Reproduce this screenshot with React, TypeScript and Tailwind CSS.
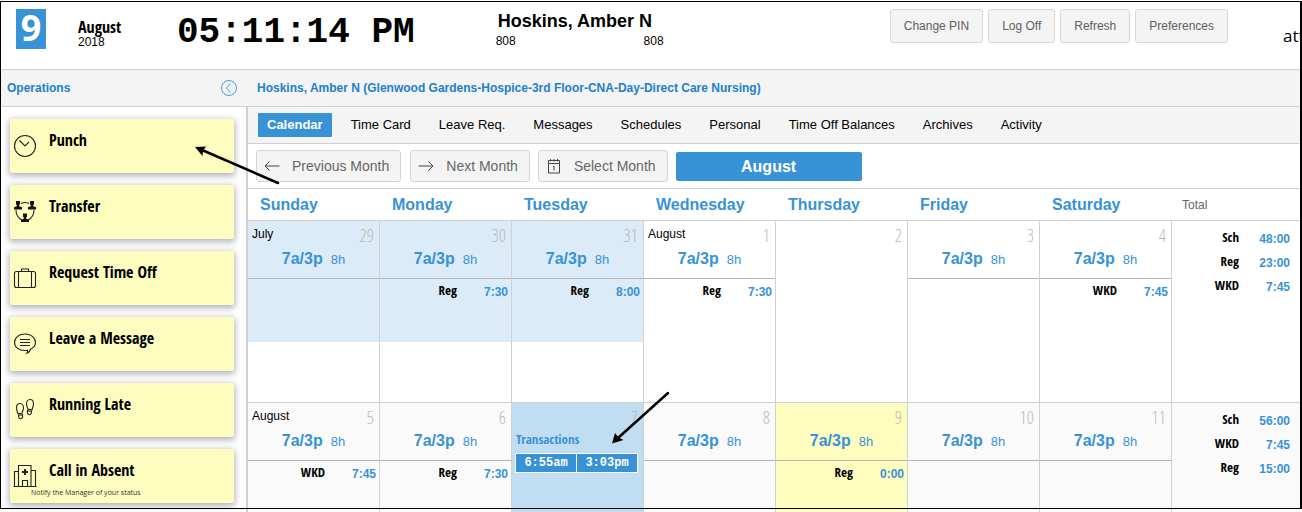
import { clsx } from 'clsx'
import type { ReactNode } from 'react'

interface Hours {
  label: string
  value: string
}

interface Day {
  num: number
  month?: string
  shift?: boolean
  hours?: Hours
  tone?: 'past' | 'today'
  punches?: string[]
}

interface Week {
  days: Day[]
  totals: Hours[]
  shaded?: boolean
}

const narrow = "font-['Open_Sans_Condensed','Liberation_Sans_Narrow','Liberation_Sans',sans-serif]"
const narrowLight =
  "font-['Open_Sans_Condensed_Light','Open_Sans_Light_Condensed','Liberation_Sans_Narrow','Open_Sans',sans-serif]"

const weekdays = ['Sunday', 'Monday', 'Tuesday', 'Wednesday', 'Thursday', 'Friday', 'Saturday']

const tabs = [
  'Calendar',
  'Time Card',
  'Leave Req.',
  'Messages',
  'Schedules',
  'Personal',
  'Time Off Balances',
  'Archives',
  'Activity',
]

const weeks: Week[] = [
  {
    days: [
      { num: 29, month: 'July', shift: true, tone: 'past' },
      { num: 30, shift: true, tone: 'past', hours: { label: 'Reg', value: '7:30' } },
      { num: 31, shift: true, tone: 'past', hours: { label: 'Reg', value: '8:00' } },
      { num: 1, month: 'August', shift: true, hours: { label: 'Reg', value: '7:30' } },
      { num: 2 },
      { num: 3, shift: true },
      { num: 4, shift: true, hours: { label: 'WKD', value: '7:45' } },
    ],
    totals: [
      { label: 'Sch', value: '48:00' },
      { label: 'Reg', value: '23:00' },
      { label: 'WKD', value: '7:45' },
    ],
  },
  {
    shaded: true,
    days: [
      { num: 5, month: 'August', shift: true, hours: { label: 'WKD', value: '7:45' } },
      { num: 6, shift: true, hours: { label: 'Reg', value: '7:30' } },
      { num: 7, punches: ['6:55am', '3:03pm'] },
      { num: 8, shift: true },
      { num: 9, shift: true, tone: 'today', hours: { label: 'Reg', value: '0:00' } },
      { num: 10, shift: true },
      { num: 11, shift: true },
    ],
    totals: [
      { label: 'Sch', value: '56:00' },
      { label: 'WKD', value: '7:45' },
      { label: 'Reg', value: '15:00' },
    ],
  },
]

function Icon({ children }: { children: ReactNode }) {
  return (
    <svg viewBox="0 0 24 24" className="h-6 w-6 shrink-0" fill="none" stroke="#222" strokeWidth="1.1" aria-hidden="true">
      {children}
    </svg>
  )
}

const person = 'M-2 -4h4v3l-.8 1.300v1l2.800 1v2.200h-8v-2.200l2.800 -1v-1l-.8 -1.300z'

const operations: { label: string; note?: string; icon: ReactNode }[] = [
  {
    label: 'Punch',
    icon: (
      <Icon>
        <circle cx="12" cy="12" r="10.5" />
        <path d="M6.500 6.500 12 12l4-4" />
      </Icon>
    ),
  },
  {
    label: 'Transfer',
    icon: (
      <Icon>
        <path d="M8 3.500q4-2 8 0M3 10q0 7 6 10M21 10q0 7-6 10" />
        <g fill="#111" stroke="none">
          <path transform="translate(5 5)" d={person} />
          <path transform="translate(19 5)" d={person} />
          <path transform="translate(12 17.500)" d={person} />
        </g>
      </Icon>
    ),
  },
  {
    label: 'Request Time Off',
    icon: (
      <Icon>
        <rect x="1.500" y="5.500" width="21" height="16" rx="2" />
        <path d="M5.500 5.500v16M18.500 5.500v16M8.500 5.500v-2.500h7v2.500" />
      </Icon>
    ),
  },
  {
    label: 'Leave a Message',
    icon: (
      <Icon>
        <path d="M17.500 17.200c3-1.400 5-3.800 5-6.700C22.500 5.500 17.800 2 12 2S1.500 5.500 1.500 10.500 6.200 18.500 12 18.500c1 0 1.800 0 2.500-.2.3 1.200 0 2-.7 3 1.700-.5 3.300-2.200 3.700-4.100z" />
        <path d="M7 7.500h10M7 10.500h10M7 13.500h10" />
      </Icon>
    ),
  },
  {
    label: 'Running Late',
    icon: (
      <Icon>
        <path d="M3.500 9.500c0-3 1.500-4 3.500-4s3.500 2 3.500 4.500c0 2-1 3-1.200 5l-4.300.8c-.5-2-1.500-3.500-1.500-6.300zM5.500 17.300l4-.7c.4 2.500-.2 4-1.700 4.200s-2.300-1.300-2.300-3.500z" />
        <path d="M20.500 5.500c0-3-1.500-4-3.500-4s-3.500 2-3.500 4.500c0 2 1 3 1.200 5l4.300.8c.5-2 1.500-3.500 1.500-6.300zM18.500 13.300l-4-.7c-.4 2.500.2 4 1.700 4.200s2.300-1.300 2.300-3.500z" />
      </Icon>
    ),
  },
  {
    label: 'Call in Absent',
    note: 'Notify the Manager of your status',
    icon: (
      <Icon>
        <path d="M.5 22.500h23M1.500 22V7.500h4M5.500 22V1.500h12.500V22M18 6.500h4.500V22M9.500 22v-5.500h5V22" />
        <path d="M12 5v6M9 8h6" strokeWidth="2" />
      </Icon>
    ),
  },
]

function HoursRow({ label, value, className }: Hours & { className?: string }) {
  return (
    <div className={clsx('flex items-start justify-end', className)}>
      <span className={clsx(narrow, 'text-[13px] leading-4 font-bold text-black')}>{label}</span>
      <span className="w-[51px] pt-[2px] text-right text-xs leading-4 font-bold text-[#3892d6]">{value}</span>
    </div>
  )
}

function DayCell({ day, shaded }: { day: Day; shaded?: boolean }) {
  return (
    <td
      className={clsx(
        'h-[182px] border-r border-b border-[#d0d0d0] p-0 align-top',
        day.tone === 'today' ? 'bg-[#fdfdc0]' : day.punches ? 'bg-[#c1ddf1]' : shaded && 'bg-[#fafafa]',
      )}
    >
      <div className={clsx('h-[121px]', day.tone === 'past' && 'bg-[#dbebf7]')}>
        <div className={clsx('h-[58px]', day.shift && 'border-b border-[#b5b5b5]')}>
          <div className="flex h-7 items-start justify-between pt-1 pr-[5px] pl-1">
            <span className="pt-px text-xs leading-4 text-black">{day.month}</span>
            <span className={clsx(narrowLight, 'text-[18px] leading-5 font-light text-[#bcbab2]')}>{day.num}</span>
          </div>
          {day.shift && (
            <div className="flex items-baseline justify-center gap-2 text-[#3892d6]">
              <span className="text-base leading-5 font-bold">7a/3p</span>
              <span className="text-[13px] leading-5">8h</span>
            </div>
          )}
          {day.punches && (
            <div className="pr-[5px] pl-[3px]">
              <div className={clsx(narrow, 'pl-px text-[13px] leading-4 font-bold text-[#3892d6]')}>Transactions</div>
              <div className="mt-[6px] flex gap-px border border-white bg-white">
                {day.punches.map((time) => (
                  <button
                    key={time}
                    className="h-[18px] flex-1 bg-[#3892d6] font-['Liberation_Mono',monospace] text-xs leading-[18px] font-bold text-white"
                  >
                    {time}
                  </button>
                ))}
              </div>
            </div>
          )}
        </div>
        {day.hours && <HoursRow {...day.hours} className="pt-[3px] pr-[3px]" />}
      </div>
    </td>
  )
}

function Header() {
  return (
    <header className="flex h-[70px] shrink-0 items-start overflow-hidden border-b border-[#d0d0d0] bg-white pt-[9px] text-black">
      <div className="ml-4 h-10 w-[30px] bg-[#3892d6] text-center font-['Open_Sans',sans-serif] text-[36px] leading-[38px] font-bold text-white">
        9
      </div>
      <div className="ml-8 w-[99px] pt-[9px]">
        <div className={clsx(narrow, 'text-base leading-[18px] font-bold')}>August</div>
        <div className="text-xs leading-3">2018</div>
      </div>
      <div className="pt-[2px] font-['Liberation_Mono',monospace] text-[36px] leading-[44px] font-bold whitespace-nowrap">
        05:11:14 PM
      </div>
      <div className="ml-[81px] w-[168px]">
        <div className="pl-[2px] text-lg leading-6 font-bold whitespace-nowrap">Hoskins, Amber N</div>
        <div className="flex justify-between text-xs leading-4">
          <span>808</span>
          <span>808</span>
        </div>
      </div>
      <div className="ml-auto flex gap-[5px]">
        {['Change PIN', 'Log Off', 'Refresh', 'Preferences'].map((label) => (
          <button
            key={label}
            className="h-[34px] rounded-[3px] border border-[#d8d8d8] bg-[#f4f4f4] px-[13px] text-xs whitespace-nowrap text-[#606060]"
          >
            {label}
          </button>
        ))}
      </div>
      <div className="ml-[55px] w-[19px] pt-[17px] font-['Open_Sans',sans-serif] text-[17px] leading-5 whitespace-nowrap">
        att
      </div>
    </header>
  )
}

function Sidebar() {
  return (
    <aside className="w-[248px] shrink-0 overflow-hidden border-r-2 border-[#d0d0d0] bg-white px-[10px] pt-3">
      <div className="flex flex-col gap-3">
        {operations.map((op) => (
          <button
            key={op.label}
            className="flex h-[54px] w-[224px] flex-col rounded-[2px] bg-[#fdfdc0] pl-[3px] text-left text-black shadow-[0_2px_6px_1px_rgba(60,60,90,0.4)]"
          >
            <span className="flex h-[39px] items-end gap-3">
              {op.icon}
              <span className={clsx(narrow, 'self-start pt-[10px] text-base leading-[22px] font-bold')}>{op.label}</span>
            </span>
            {op.note && (
              <span className="pl-[18px] font-['Open_Sans',sans-serif] text-[7px] leading-[9px] text-[#333]">{op.note}</span>
            )}
          </button>
        ))}
      </div>
    </aside>
  )
}

function Toolbar() {
  const button =
    'flex h-8 items-center rounded-[3px] border border-[#d4d4d4] bg-[#f4f4f4] pl-[7px] pr-[11px] text-sm whitespace-nowrap text-[#666]'
  return (
    <div className="flex h-[45px] shrink-0 items-center border-b border-[#d0d0d0] bg-white pl-2">
      <button className={clsx(button, 'gap-3')}>
        <svg viewBox="0 0 16 16" className="h-4 w-4" fill="none" stroke="#444" aria-hidden="true">
          <path d="M15.500 8H1M5.500 3.500 1 8l4.500 4.500" />
        </svg>
        Previous Month
      </button>
      <button className={clsx(button, 'ml-[9px] gap-3')}>
        <svg viewBox="0 0 16 16" className="h-4 w-4" fill="none" stroke="#444" aria-hidden="true">
          <path d="M.5 8H15M10.500 3.500 15 8l-4.500 4.500" />
        </svg>
        Next Month
      </button>
      <button className={clsx(button, 'ml-2 gap-3')}>
        <svg viewBox="0 0 16 16" className="h-4 w-4" fill="none" stroke="#444" aria-hidden="true">
          <path d="M2.500 2.500h11v12.500h-11zM2.500 5.500h11M4.500 1v2.500M8 1v2.500M11.500 1v2.500M7 9l1-1v4.500" />
        </svg>
        Select Month
      </button>
      <div className="ml-2 h-[29px] w-[186px] rounded-[2px] bg-[#3892d6] text-center text-base leading-[29px] font-bold text-white">
        August
      </div>
    </div>
  )
}

function Calendar() {
  return (
    <table className="w-full table-fixed border-separate border-spacing-0">
      <thead>
        <tr className="h-8">
          {weekdays.map((name) => (
            <th
              key={name}
              className="border-b border-[#d0d0d0] p-0 pl-3 text-left text-base leading-5 font-bold text-[#3892d6]"
            >
              {name}
            </th>
          ))}
          <th className="w-[130px] border-b border-[#d0d0d0] p-0 pl-[10px] text-left text-xs font-normal text-[#666]">
            Total
          </th>
        </tr>
      </thead>
      <tbody>
        {weeks.map((week) => (
          <tr key={week.days[0].num}>
            {week.days.map((day) => (
              <DayCell key={day.num} day={day} shaded={week.shaded} />
            ))}
            <td className={clsx('border-b border-[#d0d0d0] p-0 pt-2 align-top', week.shaded && 'bg-[#fafafa]')}>
              {week.totals.map((total) => (
                <HoursRow key={total.label} {...total} className="h-6 pr-3" />
              ))}
            </td>
          </tr>
        ))}
      </tbody>
    </table>
  )
}

// Callout arrows and the frame drawn over the page
function Annotations() {
  return (
    <div className="pointer-events-none absolute inset-x-0 top-px bottom-[3px] border-t border-r-2 border-b border-l border-black">
      <svg className="absolute top-0 left-0 h-full w-full" aria-hidden="true">
        <g stroke="#000" strokeWidth="2.500" strokeLinecap="round">
          <path d="M277 181 201 148" />
          <path d="M667 391 617 436" />
        </g>
        <path d="M194 145 205 144.500 202 149 201.500 154z" />
        <path d="M611 441.500 614 431 617.500 435.500 622.500 438z" />
      </svg>
    </div>
  )
}

export default function App() {
  return (
    <div className="relative flex h-screen flex-col overflow-hidden bg-white font-['Liberation_Sans',Arial,sans-serif]">
      <Header />
      <div className="flex h-[37px] shrink-0 items-center border-b border-[#d0d0d0] bg-[#f4f4f4] text-xs font-bold text-[#2080cc]">
        <div className="flex w-[257px] items-center justify-between pr-5 pl-[7px]">
          <h2>Operations</h2>
          <button aria-label="Collapse operations">
            <svg viewBox="0 0 16 16" className="h-4 w-4" fill="none" stroke="#3892d6" strokeWidth="0.9" aria-hidden="true">
              <circle cx="8" cy="8" r="7.500" />
              <path d="M9.500 3.500 5.500 8l4 4.500" />
            </svg>
          </button>
        </div>
        <h1>Hoskins, Amber N (Glenwood Gardens-Hospice-3rd Floor-CNA-Day-Direct Care Nursing)</h1>
      </div>
      <div className="flex min-h-0 flex-1">
        <Sidebar />
        <main className="flex min-w-0 flex-1 flex-col overflow-hidden">
          <nav className="flex h-[37px] shrink-0 items-center gap-[10px] border-b border-[#d0d0d0] bg-[#f4f4f4] pl-[10px]">
            {tabs.map((tab, i) => (
              <a
                key={tab}
                href="#"
                className={clsx(
                  'rounded-[1px] px-[9px] text-[13px] leading-6 whitespace-nowrap',
                  i === 0 ? 'bg-[#3892d6] font-bold text-white' : 'text-black',
                )}
              >
                {tab}
              </a>
            ))}
          </nav>
          <Toolbar />
          <Calendar />
        </main>
      </div>
      <Annotations />
    </div>
  )
}
